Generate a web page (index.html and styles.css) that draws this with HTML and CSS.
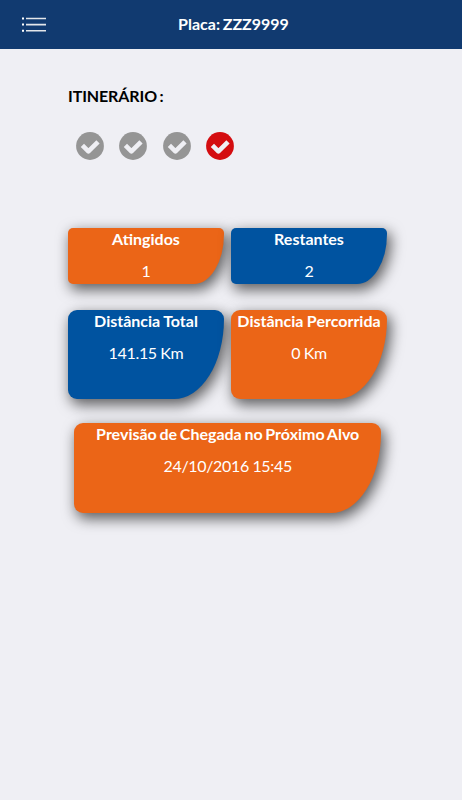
FILE: index.html
```
<!DOCTYPE html>
<html lang="pt-BR">
<head>
    <meta charset="UTF-8">
    <meta name="viewport" content="width=device-width, initial-scale=1.0">
    <title>Placa: ZZZ9999</title>
    <link rel="stylesheet" href="styles.css">
</head>
<body>
    <svg class="sprite">
        <symbol id="check" viewBox="0 0 28 28">
            <circle cx="14" cy="14" r="13.9" fill="currentColor"/>
            <path d="M6.4 13.4l6 6 9.6-9.6" fill="none" stroke="#efeff4" stroke-width="4.6" stroke-linejoin="round"/>
        </symbol>
    </svg>
    <header class="navbar">
        <svg class="menu" width="24" height="16" viewBox="0 0 24 16">
            <path d="M0 2.5h2M0 8.6h2M0 14.7h2" stroke="#fff" stroke-width="2"/>
            <path d="M4 2.5h20M4 8.6h20M4 14.7h20" stroke="#e4e6ea" stroke-width="1.6"/>
        </svg>
        <h1>Placa: ZZZ9999</h1>
    </header>
    <main class="content">
        <h2>ITINERÁRIO :</h2>
        <div class="steps">
            <svg class="step"><use href="#check"/></svg>
            <svg class="step"><use href="#check"/></svg>
            <svg class="step"><use href="#check"/></svg>
            <svg class="step current"><use href="#check"/></svg>
        </div>
        <div class="row">
            <div class="card small orange">
                <h3>Atingidos</h3>
                <p>1</p>
            </div>
            <div class="card small blue">
                <h3>Restantes</h3>
                <p>2</p>
            </div>
        </div>
        <div class="row">
            <div class="card blue">
                <h3>Distância Total</h3>
                <p>141.15 Km</p>
            </div>
            <div class="card orange">
                <h3>Distância Percorrida</h3>
                <p>0 Km</p>
            </div>
        </div>
        <div class="row last">
            <div class="card orange">
                <h3>Previsão de Chegada no Próximo Alvo</h3>
                <p>24/10/2016 15:45</p>
            </div>
        </div>
    </main>
</body>
</html>
```

FILE: styles.css
```
* {
    box-sizing: border-box;
}
body {
    margin: 0;
    min-height: 100vh;
    background-color: #efeff4;
    font-family: Lato, sans-serif;
    font-size: 16px;
}
h1, h2, h3, p {
    margin: 0;
    font-size: 16px;
    line-height: 20px;
    word-spacing: -1.2px;
}
.sprite {
    display: none;
}
.navbar {
    display: grid;
    grid-template-columns: 1fr auto 1fr;
    align-items: center;
    height: 49px;
    padding: 0 22px 1px;
    background-color: #113a70;
    color: #fff;
}
.navbar h1 {
    padding-left: 5px;
}
.content {
    width: 319px;
    margin-left: 68px;
    padding-top: 37px;
}
.content h2 {
    color: #000;
    letter-spacing: -0.1px;
}
.steps {
    display: flex;
    gap: 15.4px;
    padding: 26px 8px 0;
    margin-bottom: 68px;
}
.step {
    width: 28px;
    height: 28px;
    color: #959595;
}
.step.current {
    color: #d40d10;
}
.row {
    display: flex;
    gap: 7px;
    margin-bottom: 24.5px;
}
.row.last {
    margin-top: -0.2px;
    padding: 0 6px 0 6.4px;
}
.card {
    flex: 1;
    height: 89.5px;
    border-radius: 9px 9px 50px 9px / 9px 9px 80px 9px;
    box-shadow: 3px 5px 14px 1px rgba(0, 0, 0, 0.6);
    color: #fff;
    text-align: center;
}
.card h3 {
    padding-top: 1px;
    word-spacing: -0.5px;
}
.last .card h3 {
    word-spacing: -1.2px;
}
.card p {
    margin-top: 12px;
    word-spacing: -0.3px;
    letter-spacing: -0.33px;
}
.small {
    height: 56px;
    margin-bottom: 1px;
    border-radius: 5px 5px 30px 5px / 5px 5px 50px 5px;
}
.orange {
    background-color: #eb6517;
}
.blue {
    background-color: #0053a0;
}
```
